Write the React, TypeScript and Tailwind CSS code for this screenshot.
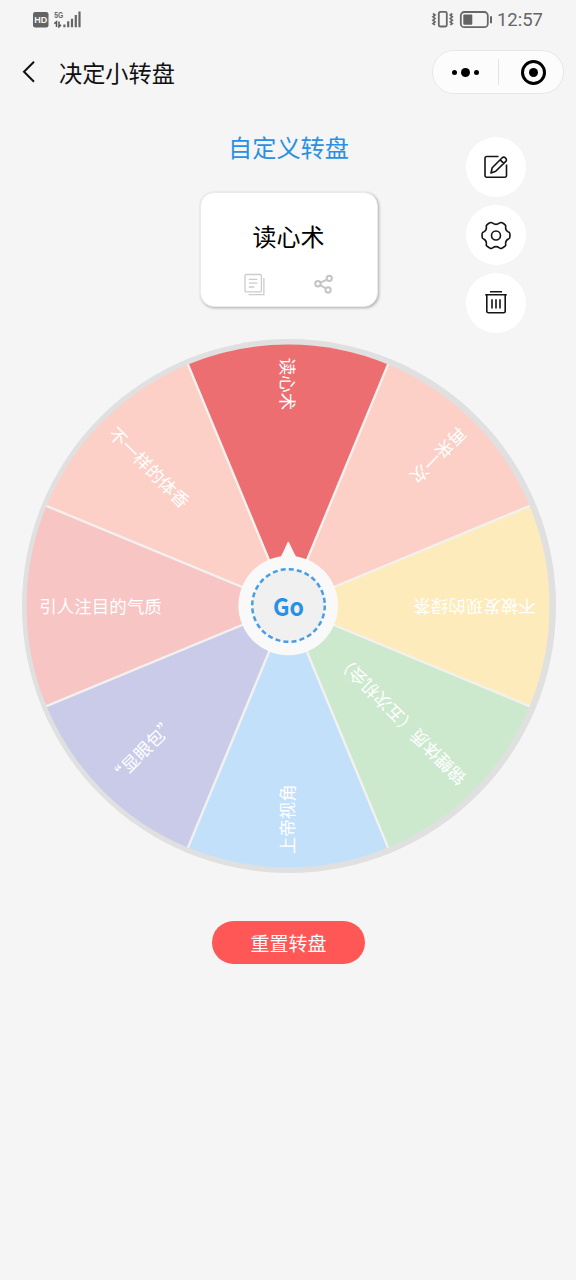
const slices = [
  { label: "引人注目的气质", color: "#f6c5c4" },
  { label: "不一样的体香", color: "#fcd0c6" },
  { label: "读心术", color: "#ed6e70" },
  { label: "再来一次", color: "#fcd0c6" },
  { label: "不被发现的绿茶", color: "#feebbb" },
  { label: "锦鲤体质（五次机会）", color: "#cce9ce" },
  { label: "上帝视角", color: "#c2e0fa" },
  { label: "“显眼包”", color: "#cacbe8" },
];

const R = 261.5;

function point(deg: number, r: number) {
  const a = (deg * Math.PI) / 180;
  return `${(r * Math.cos(a)).toFixed(2)} ${(r * Math.sin(a)).toFixed(2)}`;
}

function StatusBar() {
  return (
    <div className="flex h-10 items-center justify-between pr-[33px] pl-[32px]">
      <svg width="50" height="20" viewBox="0 0 50 20" className="font-['Liberation_Sans',sans-serif]">
        <rect x="1" y="2" width="15.5" height="15.5" rx="2.2" fill="#636363" />
        <text x="8.8" y="13.2" fontSize="9.5" fontWeight="700" fill="#f4f4f4" textAnchor="middle" textLength="13" lengthAdjust="spacingAndGlyphs">HD</text>
        <text x="22.2" y="8.2" fontSize="9.5" fontWeight="700" fill="#666" textLength="9" lengthAdjust="spacingAndGlyphs">5G</text>
        <path d="M22.3 13.6l2.2-1.8V17M27 11.5v5.2l2-1.8" stroke="#555" strokeWidth="1.5" fill="none" />
        <path d="M32.4 17.3v-2.8M36.2 17.3v-6M40 17.3V8.8M43.8 17.3V5M47.5 17.3V1.4" stroke="#666" strokeWidth="2.2" />
      </svg>
      <div className="flex items-center">
        <svg width="62" height="20" viewBox="0 0 62 20" fill="none" stroke="#686868" className="mr-[5px]">
          <rect x="8.8" y="1.9" width="8" height="14.6" rx="1.5" strokeWidth="1.8" />
          <path d="M3 3.5l2 1.6-2 1.7 2 1.7-2 1.7 2 1.7-2 1.7 2 1.3M22.300 3.500l-2 1.600 2 1.700-2 1.700 2 1.700-2 1.700 2 1.700-2 1.300" strokeWidth="1.7" />
          <rect x="30.8" y="2" width="27" height="15.2" rx="3.5" strokeWidth="1.8" />
          <rect x="33.300" y="4.600" width="9" height="10.200" rx="1" fill="#636363" stroke="none" />
          <path d="M61 6.300v7" strokeWidth="2" />
        </svg>
        <span className="font-[Roboto,sans-serif] text-[18.5px] leading-5 text-[#666]">12:57</span>
      </div>
    </div>
  );
}

function NavBar() {
  return (
    <header className="flex h-16 items-center justify-between pr-3 pl-5">
      <div className="flex items-center">
        <svg width="18" height="26" viewBox="0 0 18 26" fill="none" stroke="#111" strokeWidth="2" className="mr-[21px]">
          <path d="M14 2.800L4 12.800l10 10" />
        </svg>
        <h1 className="text-[23.200px] leading-8 text-[#111]">决定小转盘</h1>
      </div>
      <div className="flex h-11 w-[132px] items-center rounded-full border border-[#e8e8e8] bg-[#fcfcfc]">
        <div className="flex h-full w-[65px] items-center justify-center gap-1">
          <i className="size-[5px] rounded-full bg-black" />
          <i className="size-[9px] rounded-full bg-black" />
          <i className="size-[5px] rounded-full bg-black" />
        </div>
        <div className="h-[26px] w-px bg-[#e5e5e5]" />
        <div className="flex flex-1 items-center justify-center pl-1">
          <div className="flex size-[25px] items-center justify-center rounded-full border-3 border-black">
            <i className="size-[9px] rounded-full bg-black" />
          </div>
        </div>
      </div>
    </header>
  );
}

function Card() {
  return (
    <div className="mt-[26.500px] flex h-[115px] w-[178px] flex-col items-center rounded-[14px] border border-[#ebebeb] bg-white pt-[25px] shadow-[1px_1px_3px_rgba(0,0,0,0.3)]">
      <div className="text-2xl leading-9 text-black">读心术</div>
      <div className="mt-[19px] flex w-full justify-between pr-[42px] pl-[42px]">
        <svg width="24" height="24" viewBox="0 0 24 24" fill="none" stroke="#ccc" strokeWidth="1.3">
          <rect x="2" y="1.5" width="16.4" height="17.4" rx="1.2" />
          <path d="M5.8 6.4h8.5M5.8 10.2h8.5M5.8 14h5.5M20.9 5v16.6H5.5" />
        </svg>
        <svg width="22" height="24" viewBox="0 0 22 24" fill="none" stroke="#c4c4c4" strokeWidth="2">
          <circle cx="4.9" cy="10.8" r="2.7" />
          <circle cx="16.3" cy="5.3" r="2.6" />
          <circle cx="15.1" cy="16.9" r="2.6" />
          <path d="M7.500 9.600l6.400-3M7.300 12.200l5.500 3.300" />
        </svg>
      </div>
    </div>
  );
}

function Tools() {
  return (
    <div className="flex flex-col gap-2 pt-[33px] pl-[88px]">
      <button className="flex size-[60px] items-center justify-center rounded-full bg-white">
        <svg width="28" height="28" viewBox="0 0 28 28" fill="none" stroke="#151515" strokeWidth="1.6" strokeLinejoin="round">
          <path d="M16.500 3.500H4.700A1.700 1.700 0 0 0 3 5.200V22.600A1.700 1.700 0 0 0 4.700 24.300H22.800A1.700 1.700 0 0 0 24.500 22.600V11.500" />
          <path d="M9 20l1.200-5.200L20.200 4.800a2.100 2.100 0 0 1 3 0l.6.600a2.100 2.100 0 0 1 0 3L13.700 18.300zM18.200 6.900l3.500 3.500" />
        </svg>
      </button>
      <button className="flex size-[60px] items-center justify-center rounded-full bg-white">
        <svg width="30" height="30" viewBox="0 0 30 30" fill="none" stroke="#151515" strokeWidth="1.6" strokeLinejoin="round">
          <circle cx="15" cy="15.500" r="4.500" />
          <path d="M9.600 2.600Q10.700 2.100 11.600 3.200Q15 5.500 18.400 3.200Q19.300 2.100 20.400 2.600Q22.700 3.400 24.300 5.100Q25 5.900 24.600 7.100Q24.400 10.800 27.400 12Q28.700 12.400 28.800 13.500Q29.100 15.500 28.800 17.500Q28.700 18.600 27.400 19Q24.400 20.200 24.600 23.900Q25 25.100 24.300 25.900Q22.700 27.600 20.400 28.400Q19.300 28.900 18.400 27.800Q15 25.500 11.600 27.800Q10.700 28.900 9.600 28.400Q7.300 27.600 5.700 25.900Q5 25.100 5.400 23.900Q5.600 20.200 2.600 19Q1.300 18.600 1.200 17.500Q.9 15.500 1.200 13.500Q1.300 12.400 2.600 12Q5.600 10.800 5.400 7.100Q5 5.900 5.700 5.100Q7.300 3.400 9.600 2.600Z" />
        </svg>
      </button>
      <button className="flex size-[60px] items-center justify-center rounded-full bg-white">
        <svg width="26" height="26" viewBox="0 0 26 26" fill="none" stroke="#151515" strokeWidth="1.600">
          <path d="M7 1.700h12M2.200 4.800h21.600M3.800 4.800V21.200a1.500 1.500 0 0 0 1.500 1.500H20.700a1.500 1.500 0 0 0 1.500-1.500V4.800M9 9.200v9.300M13 9.200v9.300M17 9.200v9.300" />
        </svg>
      </button>
    </div>
  );
}

function Wheel() {
  return (
    <svg width="536" height="536" viewBox="-268 -268 536 536" className="ml-[21px] block">
      <circle r="267" fill="#e0e0e0" />
      <g transform="translate(-1 0)">
        {slices.map((s, i) => {
          const mid = 180 + i * 45;
          return (
            <path
              key={s.label}
              d={`M0 0L${point(mid - 22.5, R)}A${R} ${R} 0 0 1 ${point(mid + 22.5, R)}Z`}
              fill={s.color}
            />
          );
        })}
        {slices.map((s, i) => (
          <path key={s.label} d={`M0 0L${point(157.5 + i * 45, R)}`} stroke="#f3f1ef" strokeWidth="2.4" />
        ))}
      </g>
      <g transform="translate(-1.5 0)">
        {slices.map((s, i) => (
          <text key={s.label} x="-248.300" y="6.500" fontSize="17.500" fill="#fff" transform={`rotate(${i * 45})`}>
            {s.label}
          </text>
        ))}
      </g>
      <path d="M-12 -44Q-8 -48 -1.800 -63Q-.7 -65.500 .4 -63Q7 -48 11 -44Z" fill="#f9f9f9" />
      <circle cx="-.8" cy="-.5" r="49.800" fill="#f9f9f9" />
      <circle cx="-.5" cy="-.5" r="36.300" fill="#f0f0f0" stroke="#4a9de3" strokeWidth="2.500" strokeDasharray="5 3.146" />
      <text x="-.5" y="9.500" fontSize="24.500" fontWeight="700" fill="#2990e3" textAnchor="middle" textLength="31" lengthAdjust="spacingAndGlyphs">Go</text>
    </svg>
  );
}

export default function App() {
  return (
    <div className="min-h-[1280px] w-[576px] bg-[#f5f5f5] font-['Noto_Sans_CJK_SC',sans-serif]">
      <StatusBar />
      <NavBar />
      <main>
        <section className="flex h-[234px] pl-[199.500px]">
          <div className="flex flex-col items-center pt-[25px]">
            <h2 className="text-[24.200px] leading-9 text-[#2990e3]">自定义转盘</h2>
            <Card />
          </div>
          <Tools />
        </section>
        <Wheel />
        <button className="mt-[47px] ml-[212px] flex h-[43px] w-[153px] items-center justify-center rounded-full bg-[#ff5656] pb-px text-[19px] leading-none text-white">
          重置转盘
        </button>
      </main>
    </div>
  );
}
